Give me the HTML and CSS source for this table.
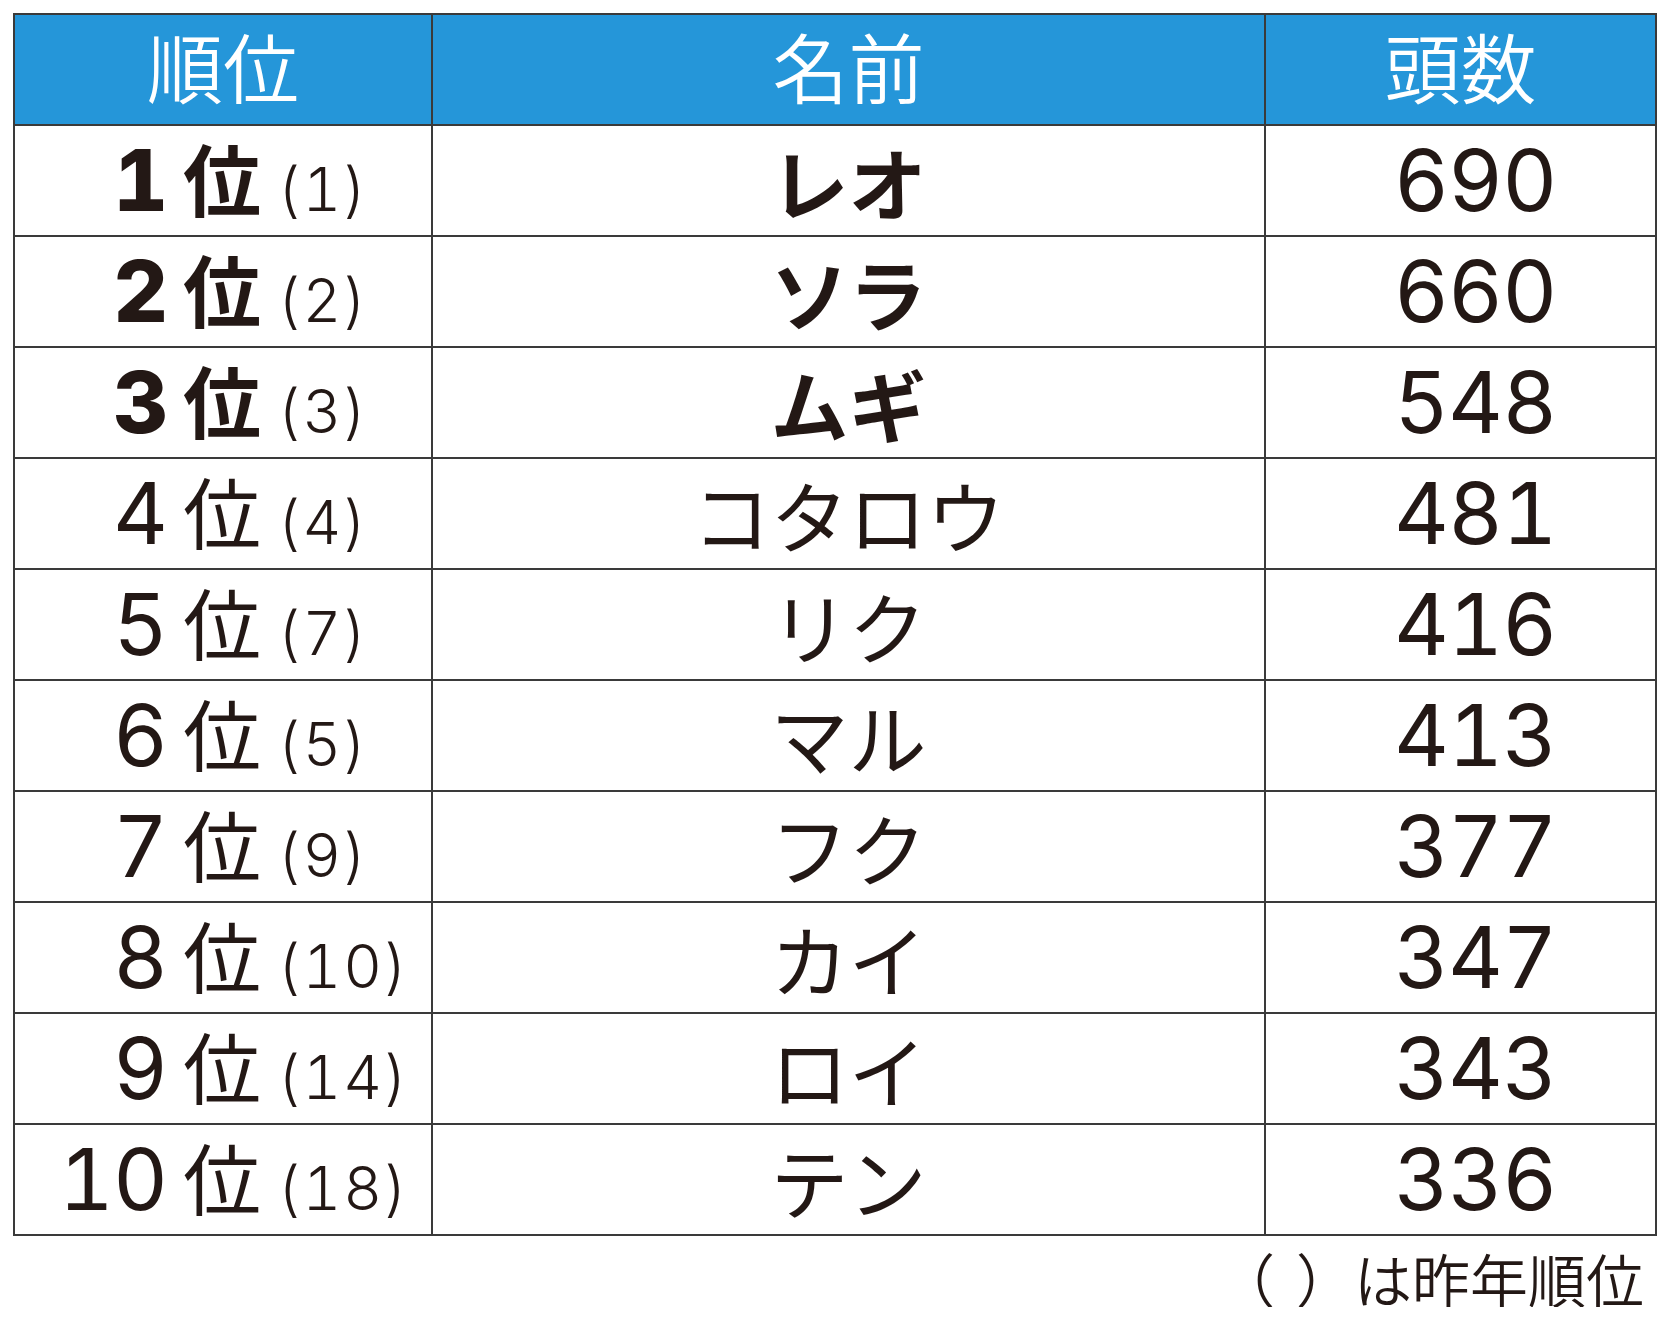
FILE: index.html
```html
<!DOCTYPE html>
<html lang="ja">
<head>
<meta charset="utf-8">
<title>名前ランキング</title>
<link rel="stylesheet" href="styles.css">
</head>
<body>
<div class="sheet">
  <table class="ranking">
    <colgroup>
      <col class="c-rank">
      <col class="c-name">
      <col class="c-count">
    </colgroup>
    <thead>
      <tr><th>順位</th><th>名前</th><th>頭数</th></tr>
    </thead>
    <tbody>
      <tr class="top"><td><div class="rank"><span class="num">1</span><span class="i">位</span><span class="prev">(1)</span></div></td><td class="name">レオ</td><td class="count">690</td></tr>
      <tr class="top"><td><div class="rank"><span class="num">2</span><span class="i">位</span><span class="prev">(2)</span></div></td><td class="name">ソラ</td><td class="count">660</td></tr>
      <tr class="top"><td><div class="rank"><span class="num">3</span><span class="i">位</span><span class="prev">(3)</span></div></td><td class="name">ムギ</td><td class="count">548</td></tr>
      <tr><td><div class="rank"><span class="num">4</span><span class="i">位</span><span class="prev">(4)</span></div></td><td class="name">コタロウ</td><td class="count">481</td></tr>
      <tr><td><div class="rank"><span class="num">5</span><span class="i">位</span><span class="prev">(7)</span></div></td><td class="name">リク</td><td class="count">416</td></tr>
      <tr><td><div class="rank"><span class="num">6</span><span class="i">位</span><span class="prev">(5)</span></div></td><td class="name">マル</td><td class="count">413</td></tr>
      <tr><td><div class="rank"><span class="num">7</span><span class="i">位</span><span class="prev">(9)</span></div></td><td class="name">フク</td><td class="count">377</td></tr>
      <tr><td><div class="rank"><span class="num">8</span><span class="i">位</span><span class="prev">(10)</span></div></td><td class="name">カイ</td><td class="count">347</td></tr>
      <tr><td><div class="rank"><span class="num">9</span><span class="i">位</span><span class="prev">(14)</span></div></td><td class="name">ロイ</td><td class="count">343</td></tr>
      <tr><td><div class="rank"><span class="num">10</span><span class="i">位</span><span class="prev">(18)</span></div></td><td class="name">テン</td><td class="count">336</td></tr>
    </tbody>
  </table>
  <p class="note">（ ）は昨年順位</p>
</div>
</body>
</html>
```

FILE: styles.css
```css
html, body {
  margin: 0;
  padding: 0;
  background: #ffffff;
}

body {
  font-family: "Inter", "Noto Sans CJK JP", sans-serif;
  color: #231815;
}

.sheet {
  padding: 13px 0 0 13px;
  width: 1642px;
}

.ranking {
  border-collapse: collapse;
  table-layout: fixed;
  width: 1642px;
}

.c-rank { width: 418px; }
.c-name { width: 833px; }
.c-count { width: 391px; }

.ranking th,
.ranking td {
  border: 2px solid #3a3a3a;
  padding: 0;
  vertical-align: middle;
  line-height: 1;
}

.ranking tr {
  height: 111px;
}

.ranking th {
  background: #2596d9;
  color: #ffffff;
  font-family: "Noto Sans CJK JP", sans-serif;
  font-weight: 350;
  font-size: 76px;
  text-align: center;
  padding-bottom: 9px;
}

.rank {
  display: grid;
  grid-template-columns: 152px 78px 1fr;
  column-gap: 16px;
  align-items: baseline;
}

.rank .num {
  text-align: right;
  font-size: 85px;
  font-weight: 400;
  font-variant-numeric: tabular-nums;
  letter-spacing: -1px;
}

.rank .i {
  font-family: "Noto Sans CJK JP", sans-serif;
  font-size: 78px;
  font-weight: 400;
}

.rank .prev {
  font-size: 60px;
  font-weight: 300;
  letter-spacing: 2px;
  font-variant-numeric: tabular-nums;
}

.top .rank .num {
  font-weight: 800;
}

.top .rank .i {
  font-weight: 700;
}

.name {
  font-family: "Noto Sans CJK JP", sans-serif;
  font-size: 78px;
  font-weight: 400;
  text-align: center;
}

.top .name {
  font-weight: 700;
}

.count {
  font-size: 85px;
  font-weight: 400;
  font-variant-numeric: tabular-nums;
  letter-spacing: -1px;
  text-align: left;
  padding-left: 128px !important;
}

.note {
  margin: 0;
  width: 1642px;
  box-sizing: border-box;
  padding: 13px 11px 0 0;
  text-align: right;
  font-family: "Noto Sans CJK JP", sans-serif;
  font-size: 58px;
  font-weight: 350;
  line-height: 1;
  word-spacing: 8px;
}
```
